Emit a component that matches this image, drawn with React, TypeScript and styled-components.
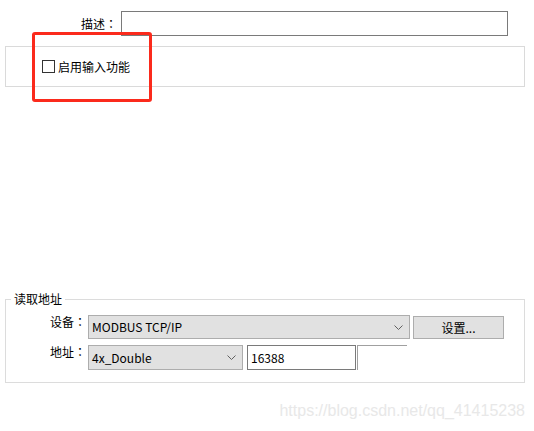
import styled, { createGlobalStyle } from "styled-components"

const GlobalStyle = createGlobalStyle`
  body {
    margin: 0;
    background: #fff;
    font-family: "Noto Sans CJK SC", "Noto Sans", sans-serif;
    font-size: 12px;
    line-height: 14px;
    color: #000;
  }
`

const Page = styled.div`
  position: relative;
  width: 534px;
  height: 431px;
  overflow: hidden;
`

const DescRow = styled.div`
  display: flex;
  align-items: center;
  gap: 4px;
  padding-top: 11px;
`

const Label = styled.span<{ $w: number }>`
  width: ${(p) => p.$w}px;
  text-align: right;
  flex-shrink: 0;
  white-space: nowrap;
`

// centred full-width colon, as the Windows UI font draws it
const Colon = styled.span`
  font-family: "Noto Sans CJK TC", "Noto Sans CJK SC", sans-serif;
`

const TextBox = styled.div<{ $w: number }>`
  box-sizing: border-box;
  width: ${(p) => p.$w}px;
  height: 25px;
  border: 1px solid #7a7a7a;
  background: #fff;
  padding-left: 3px;
  display: flex;
  align-items: center;
`

const Panel = styled.div`
  box-sizing: border-box;
  margin: 10px 9px 0 5px;
  height: 41px;
  border: 1px solid #dadada;
  display: flex;
  align-items: center;
  padding-left: 36px;
`

const CheckBox = styled.span`
  box-sizing: border-box;
  width: 13px;
  height: 13px;
  border: 1px solid #333;
  background: #fff;
  margin-right: 3px;
`

const Annotation = styled.div`
  position: absolute;
  left: 32px;
  top: 32px;
  box-sizing: border-box;
  width: 120px;
  height: 70px;
  border: 3px solid #fb2a1c;
  border-radius: 3px;
  pointer-events: none;
`

const Group = styled.fieldset`
  margin: 205px 9px 0 5px;
  padding: 9px 0 12px 0;
  border: 1px solid #dcdcdc;
  display: flex;
  flex-direction: column;
  gap: 6px;
`

const Legend = styled.legend`
  margin-left: 5px;
  padding: 0 3px;
  line-height: 14px;
`

const Row = styled.div`
  display: flex;
  align-items: flex-start;
`

const Select = styled.div<{ $w: number; $h: number }>`
  box-sizing: border-box;
  width: ${(p) => p.$w}px;
  height: ${(p) => p.$h}px;
  margin-left: 2px;
  background: #e1e1e1;
  border: 1px solid #adadad;
  display: flex;
  align-items: center;
  justify-content: space-between;
  padding: 0 6px 0 3px;
`

const Button = styled.div`
  box-sizing: border-box;
  width: 91px;
  height: 23px;
  margin: 1px 0 0 3px;
  background: #e1e1e1;
  border: 1px solid #adadad;
  display: flex;
  align-items: center;
  justify-content: center;
`

const Stub = styled.div`
  box-sizing: border-box;
  width: 50px;
  height: 25px;
  margin-left: 1px;
  border-top: 1px solid #a0a0a0;
  border-left: 1px solid #a0a0a0;
`

const Watermark = styled.div`
  margin-top: 19px;
  padding-right: 9px;
  text-align: right;
  font-family: "Liberation Sans", Arial, sans-serif;
  font-size: 16px;
  line-height: 18px;
  color: #e8e8e8;
`

const Chevron = () => (
  <svg width="9" height="5" viewBox="0 0 9 5">
    <polyline points="0.5,0.5 4.5,4.5 8.5,0.5" fill="none" stroke="#606060" strokeWidth="1" />
  </svg>
)

const App = () => {
  return (
    <Page>
      <GlobalStyle />
      <DescRow>
        <Label $w={117}>描述<Colon>：</Colon></Label>
        <TextBox $w={387} />
      </DescRow>
      <Panel>
        <CheckBox />
        <span>启用输入功能</span>
      </Panel>
      <Group>
        <Legend>读取地址</Legend>
        <Row>
          <Label $w={80}>设备<Colon>：</Colon></Label>
          <Select $w={322} $h={24}>
            <span>MODBUS TCP/IP</span>
            <Chevron />
          </Select>
          <Button>设置...</Button>
        </Row>
        <Row>
          <Label $w={80}>地址<Colon>：</Colon></Label>
          <Select $w={155} $h={25}>
            <span>4x_Double</span>
            <Chevron />
          </Select>
          <TextBox $w={109} style={{ marginLeft: 4 }}>16388</TextBox>
          <Stub />
        </Row>
      </Group>
      <Watermark>https://blog.csdn.net/qq_41415238</Watermark>
      <Annotation />
    </Page>
  )
}

export default App
